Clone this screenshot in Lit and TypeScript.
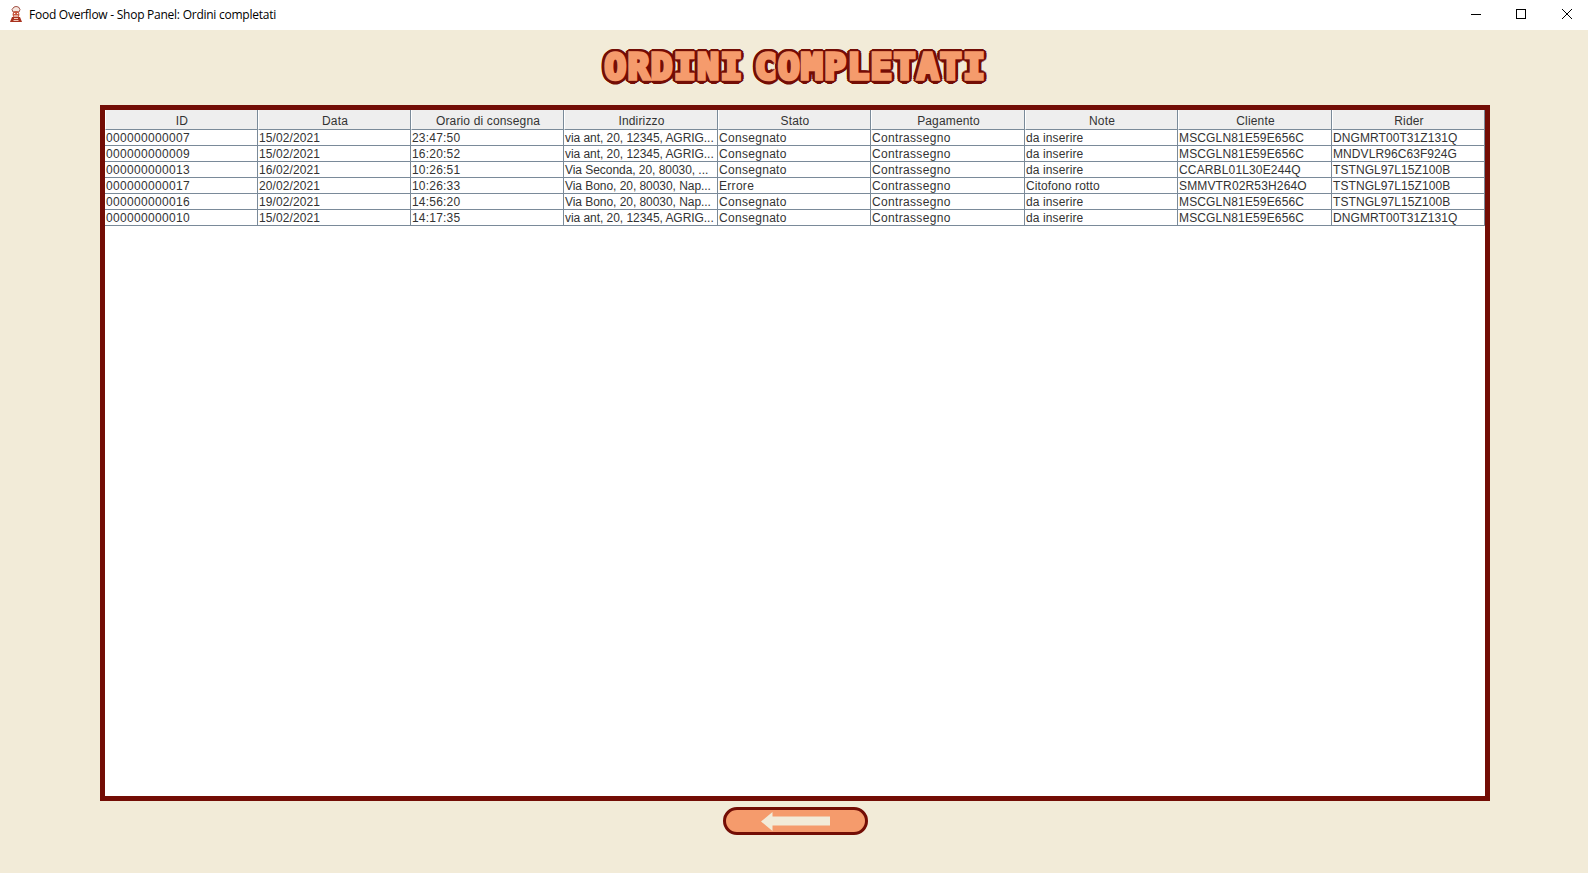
import { LitElement, html, css, svg } from "lit";
import { customElement } from "lit/decorators.js";

const HEAD = ["ID","Data","Orario di consegna","Indirizzo","Stato","Pagamento","Note","Cliente","Rider"];
const ROWS = [
["000000000007","15/02/2021","23:47:50","via ant, 20, 12345, AGRIG...","Consegnato","Contrassegno","da inserire","MSCGLN81E59E656C","DNGMRT00T31Z131Q"],
["000000000009","15/02/2021","16:20:52","via ant, 20, 12345, AGRIG...","Consegnato","Contrassegno","da inserire","MSCGLN81E59E656C","MNDVLR96C63F924G"],
["000000000013","16/02/2021","10:26:51","Via Seconda, 20, 80030, ...","Consegnato","Contrassegno","da inserire","CCARBL01L30E244Q","TSTNGL97L15Z100B"],
["000000000017","20/02/2021","10:26:33","Via Bono, 20, 80030, Nap...","Errore","Contrassegno","Citofono rotto","SMMVTR02R53H264O","TSTNGL97L15Z100B"],
["000000000016","19/02/2021","14:56:20","Via Bono, 20, 80030, Nap...","Consegnato","Contrassegno","da inserire","MSCGLN81E59E656C","TSTNGL97L15Z100B"],
["000000000010","15/02/2021","14:17:35","via ant, 20, 12345, AGRIG...","Consegnato","Contrassegno","da inserire","MSCGLN81E59E656C","DNGMRT00T31Z131Q"],
];

@customElement("app-root")
export class AppRoot extends LitElement {
  static styles = css`
    :host { display: block; width: 1588px; height: 873px; overflow: hidden; background: #f2ebd8; }
    .win { display: flex; flex-direction: column; height: 100%; }
    .bar { display: flex; align-items: center; height: 30px; flex: none; background: #fff; }
    .app-icon { width: 14px; height: 17px; margin-left: 9px; margin-bottom: 1px; flex: none; }
    .bar-title { margin: 0 0 2px 6px; font: 12px "Open Sans", sans-serif; letter-spacing: -0.25px; color: #000; flex: 1; white-space: nowrap; }
    .ctl { width: 46px; height: 30px; flex: none; display: block; }
    .head { box-sizing: border-box; height: 75px; padding-bottom: 3px; flex: none; display: flex; align-items: center; justify-content: center; }
    h1 {
      margin: 0 0 0 3px; font: 700 36px "DejaVu Sans Mono", monospace; letter-spacing: 1.5px; word-spacing: -12px; color: #f59b6c; white-space: nowrap;
      -webkit-text-stroke: 3.6px #f59b6c;
      text-shadow: 4.5px 0 #730d05, -4.5px 0 #730d05, 0 4.5px #730d05, 0 -4.5px #730d05,
        3.2px 3.2px #730d05, -3.2px 3.2px #730d05, 3.2px -3.2px #730d05, -3.2px -3.2px #730d05,
        4.2px 1.7px #730d05, -4.2px 1.7px #730d05, 4.2px -1.7px #730d05, -4.2px -1.7px #730d05,
        1.7px 4.2px #730d05, -1.7px 4.2px #730d05, 1.7px -4.2px #730d05, -1.7px -4.2px #730d05;
    }
    .panel { box-sizing: border-box; width: 1390px; height: 696px; margin-left: 100px; flex: none; border: 5px solid #730d05; background: #fff; }
    .grid { display: grid; grid-template-columns: 153px 153px 153px 154px 153px 154px 153px 154px 153px;
      font: 12px "Liberation Sans", Arial, sans-serif; color: #333; }
    .th, .td { box-sizing: border-box; border-right: 1px solid #7a8a99; border-bottom: 1px solid #7a8a99; white-space: nowrap; overflow: hidden; }
    .th { height: 20px; padding: 1px 0 0 1px; line-height: 20px; text-align: center; background: #eee; border-left: 1px solid #fff; letter-spacing: 0.15px; }
    .td { height: 16px; line-height: 16px; padding-left: 1px; }
    .ls0 { letter-spacing: 0.33px; }
    .ls1 { letter-spacing: 0.1px; }
    .ls2 { letter-spacing: 0.2px; }
    .ls3 { letter-spacing: -0.05px; }
    .ls4 { letter-spacing: 0.3px; }
    .ls5 { letter-spacing: 0.33px; }
    .ls6 { letter-spacing: 0.12px; }
    .ls7 { letter-spacing: 0.15px; }
    .ls8 { letter-spacing: 0.08px; }
    .back { box-sizing: border-box; display: flex; align-items: center; justify-content: center; width: 145px; height: 28px; margin: 6px 0 0 723px; flex: none;
      padding: 0; border: 3px solid #730d05; border-radius: 14px; background: #f59b6c; }
    .arrow { width: 69px; height: 19px; display: block; }
  `;

  render() {
    return html`<div class="win">
      <div class="bar">
        <svg class="app-icon" viewBox="0 0 14 17">
          <path d="M3 3.5 5 1 7 .5 9.5 1 11 3.5 10 6 4 6Z" fill="#f6e6df" stroke="#8c2a1c" stroke-width=".8"/>
          <circle cx="7" cy="8.5" r="3.4" fill="#c9583f"/>
          <path d="M3 11 11 11 13 16 1 16Z" fill="#a8321f"/>
          <path d="M5 7.5h1.2M8 7.5h1.2M5 10h4" stroke="#fff" stroke-width="1"/>
          <path d="M5 12.5h4M4.5 14.5h5" stroke="#f0c8b8" stroke-width="1"/>
        </svg>
        <div class="bar-title">Food Overflow - Shop Panel: Ordini completati</div>
        <svg class="ctl" viewBox="0 0 46 30">${svg`<path d="M21 14.5H31" stroke="#000" fill="none"/>`}</svg>
        <svg class="ctl" viewBox="0 0 46 30">${svg`<rect x="20.5" y="9.5" width="9" height="9" stroke="#000" fill="none"/>`}</svg>
        <svg class="ctl" viewBox="0 0 46 30">${svg`<path d="M20 9 30 19M30 9 20 19" stroke="#000" fill="none"/>`}</svg>
      </div>
      <div class="head"><h1>ORDINI COMPLETATI</h1></div>
      <div class="panel">
        <div class="grid">
          ${HEAD.map((h) => html`<div class="th">${h}</div>`)}
          ${ROWS.map((row) => row.map((c, i) => html`<div class="td ls${i}">${c}</div>`))}
        </div>
      </div>
      <button class="back" aria-label="Indietro">
        <svg class="arrow" viewBox="0 0 69 19"><path d="M0 9.5 11.5 0V4.5H69V13.5H11.5V19Z" fill="#f2ebd8"/></svg>
      </button>
    </div>`;
  }
}
